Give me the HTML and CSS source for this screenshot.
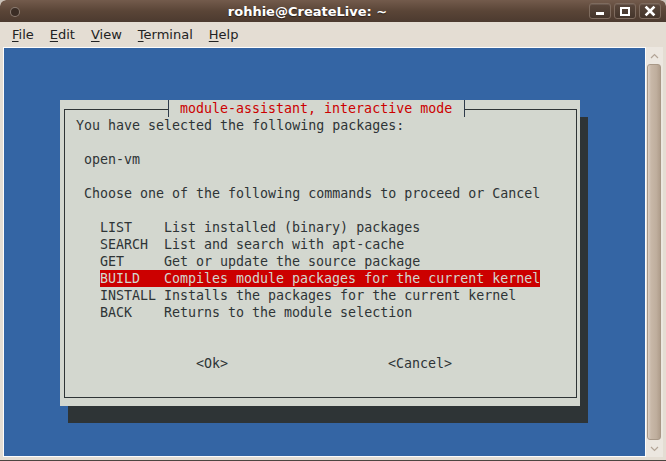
FILE: index.html
```html
<!DOCTYPE html>
<html>
<head>
    <title>rohhie@CreateLive: ~</title>
    <link rel="stylesheet" href="styles.css">
</head>
<body>
    <div class="window">
        <div class="titlebar">
            <div class="menu-btn"></div>
            <div class="title">rohhie@CreateLive: ~</div>
            <div class="wm-buttons">
                <div class="wm-btn">
                    <svg width="20" height="14" viewBox="0 0 20 14"><rect x="6" y="8" width="8" height="3" fill="#fff"/></svg>
                </div>
                <div class="wm-btn">
                    <svg width="20" height="14" viewBox="0 0 20 14"><rect x="6" y="4" width="8" height="7" fill="none" stroke="#fff" stroke-width="2"/></svg>
                </div>
                <div class="wm-btn">
                    <svg width="20" height="14" viewBox="0 0 20 14"><path d="M6.5 3.5 L13.5 10.5 M13.5 3.5 L6.5 10.5" stroke="#fff" stroke-width="2.6" stroke-linecap="square"/></svg>
                </div>
            </div>
        </div>

        <div class="menubar">
            <span class="menu-item"><u>F</u>ile</span>
            <span class="menu-item"><u>E</u>dit</span>
            <span class="menu-item"><u>V</u>iew</span>
            <span class="menu-item"><u>T</u>erminal</span>
            <span class="menu-item"><u>H</u>elp</span>
        </div>

        <div class="main">
            <div class="terminal">
                <div class="dialog">
                    <div class="dialog-title">module-assistant, interactive mode</div>
                    <div class="frame">
                        <div class="line">You have selected the following packages:</div>
                        <div class="line"></div>
                        <div class="line indent">open-vm</div>
                        <div class="line"></div>
                        <div class="line indent">Choose one of the following commands to proceed or Cancel</div>
                        <div class="line"></div>
                        <div class="choices">
                            <div class="choice"><span class="key">LIST</span><span>List installed (binary) packages</span></div>
                            <div class="choice"><span class="key">SEARCH</span><span>List and search with apt-cache</span></div>
                            <div class="choice"><span class="key">GET</span><span>Get or update the source package</span></div>
                            <div class="choice selected"><span class="key">BUILD</span><span>Compiles module packages for the current kernel</span></div>
                            <div class="choice"><span class="key">INSTALL</span><span>Installs the packages for the current kernel</span></div>
                            <div class="choice"><span class="key">BACK</span><span>Returns to the module selection</span></div>
                        </div>
                        <div class="line"></div>
                        <div class="line"></div>
                        <div class="buttons">
                            <span>&lt;Ok&gt;</span>
                            <span>&lt;Cancel&gt;</span>
                        </div>
                    </div>
                </div>
            </div>

            <div class="scrollbar">
                <div class="arrow">
                    <svg width="9" height="6" viewBox="0 0 9 6"><polyline points="1,5 4.5,1.5 8,5" fill="none" stroke="#b3a597" stroke-width="1.2"/></svg>
                </div>
                <div class="thumb"></div>
                <div class="arrow">
                    <svg width="9" height="6" viewBox="0 0 9 6"><polyline points="1,1 4.5,4.5 8,1" fill="none" stroke="#b3a597" stroke-width="1.2"/></svg>
                </div>
            </div>
        </div>
    </div>
</body>
</html>
```

FILE: styles.css
```css
body {
    margin: 0;
    background: #c9c1b8;
    overflow: hidden;
}
.window {
    width: 666px;
    height: 461px;
    box-sizing: border-box;
    display: flex;
    flex-direction: column;
    background: #e4ddd3;
    border-bottom: 1px solid #4c4540;
    border-radius: 6px 6px 0 0;
    overflow: hidden;
}

/* title bar */
.titlebar {
    height: 22px;
    flex: none;
    display: flex;
    align-items: center;
    background: linear-gradient(#735b4c, #5a4537 50%, #4c3a2f);
    border-radius: 6px 6px 0 0;
}
.menu-btn {
    width: 8px;
    height: 8px;
    margin: 1px 7px 0 11px;
    border-radius: 50%;
    background: #3b2d25;
    box-shadow: 0 0 0 1px #8a7a70;
}
.title {
    flex: 1;
    text-align: center;
    font-family: "DejaVu Sans", sans-serif;
    font-weight: bold;
    font-size: 13px;
    color: #fff;
    text-shadow: 0 1px 1px #2a1f19;
}
.wm-buttons {
    display: flex;
    gap: 3px;
    margin-right: 5px;
}
.wm-btn {
    width: 20px;
    height: 14px;
    border: 1px solid #7e6b5e;
    border-radius: 3px;
    background: linear-gradient(#5a473b, #44352b);
    box-shadow: inset 0 1px rgba(255, 255, 255, 0.1);
}
.wm-btn svg {
    display: block;
}

/* menu bar */
.menubar {
    height: 25px;
    flex: none;
    display: flex;
    align-items: center;
    padding-left: 4px;
    font-family: "DejaVu Sans", sans-serif;
    font-size: 13px;
    color: #222;
}
.menu-item {
    padding: 0 8px;
}
.menu-item u {
    text-underline-offset: 2px;
}

/* terminal area */
.main {
    flex: 1;
    display: flex;
    padding: 0 3px 3px 3px;
}
.terminal {
    width: 585px;
    height: 356px;
    flex: none;
    padding: 52px 0 0 56px;
    border: 1px solid #fdfcfb;
    background: #3465a4;
}
.scrollbar {
    width: 17px;
    flex: none;
    display: flex;
    flex-direction: column;
    background: #ece7e0;
}
.arrow {
    height: 17px;
    display: flex;
    align-items: center;
    justify-content: center;
}
.arrow svg {
    display: block;
}
.thumb {
    flex: 1;
    margin: 0 2px 0 1px;
    border: 1px solid #a89887;
    border-radius: 3px;
    background: linear-gradient(to right, #ddd1c5, #c8b8a8 25%, #bfae9d 70%, #b09e8c);
}

/* whiptail dialog */
.dialog {
    position: relative;
    width: 520px;
    height: 306px;
    box-sizing: border-box;
    padding: 9px 3px 8px 4px;
    background: #d3d7cf;
    box-shadow: 8px 17px 0 #2e3436;
    font-family: "DejaVu Sans Mono", monospace;
    font-size: 13.3px;
    line-height: 17px;
    color: #2e3436;
}
.dialog-title {
    position: absolute;
    top: 0;
    left: 108px;
    height: 17px;
    box-sizing: border-box;
    padding: 0 12px 0 11px;
    border-left: 1px solid #2e3a4a;
    border-right: 1px solid #2e3a4a;
    background: #d3d7cf;
    color: #cc0000;
    white-space: pre;
}
.frame {
    height: 100%;
    box-sizing: border-box;
    border: 1px solid #2e3436;
    padding: 7px 0 0 11px;
}
.line {
    height: 17px;
    white-space: pre;
}
.indent {
    padding-left: 8px;
}
.choices {
    margin-left: 24px;
}
.choice {
    display: flex;
    width: fit-content;
    height: 17px;
    white-space: pre;
}
.key {
    width: 64px;
}
.choice.selected {
    background: #cc0000;
    color: #d3d7cf;
}
.buttons {
    display: flex;
    gap: 160px;
    padding-left: 120px;
    height: 17px;
}
```
